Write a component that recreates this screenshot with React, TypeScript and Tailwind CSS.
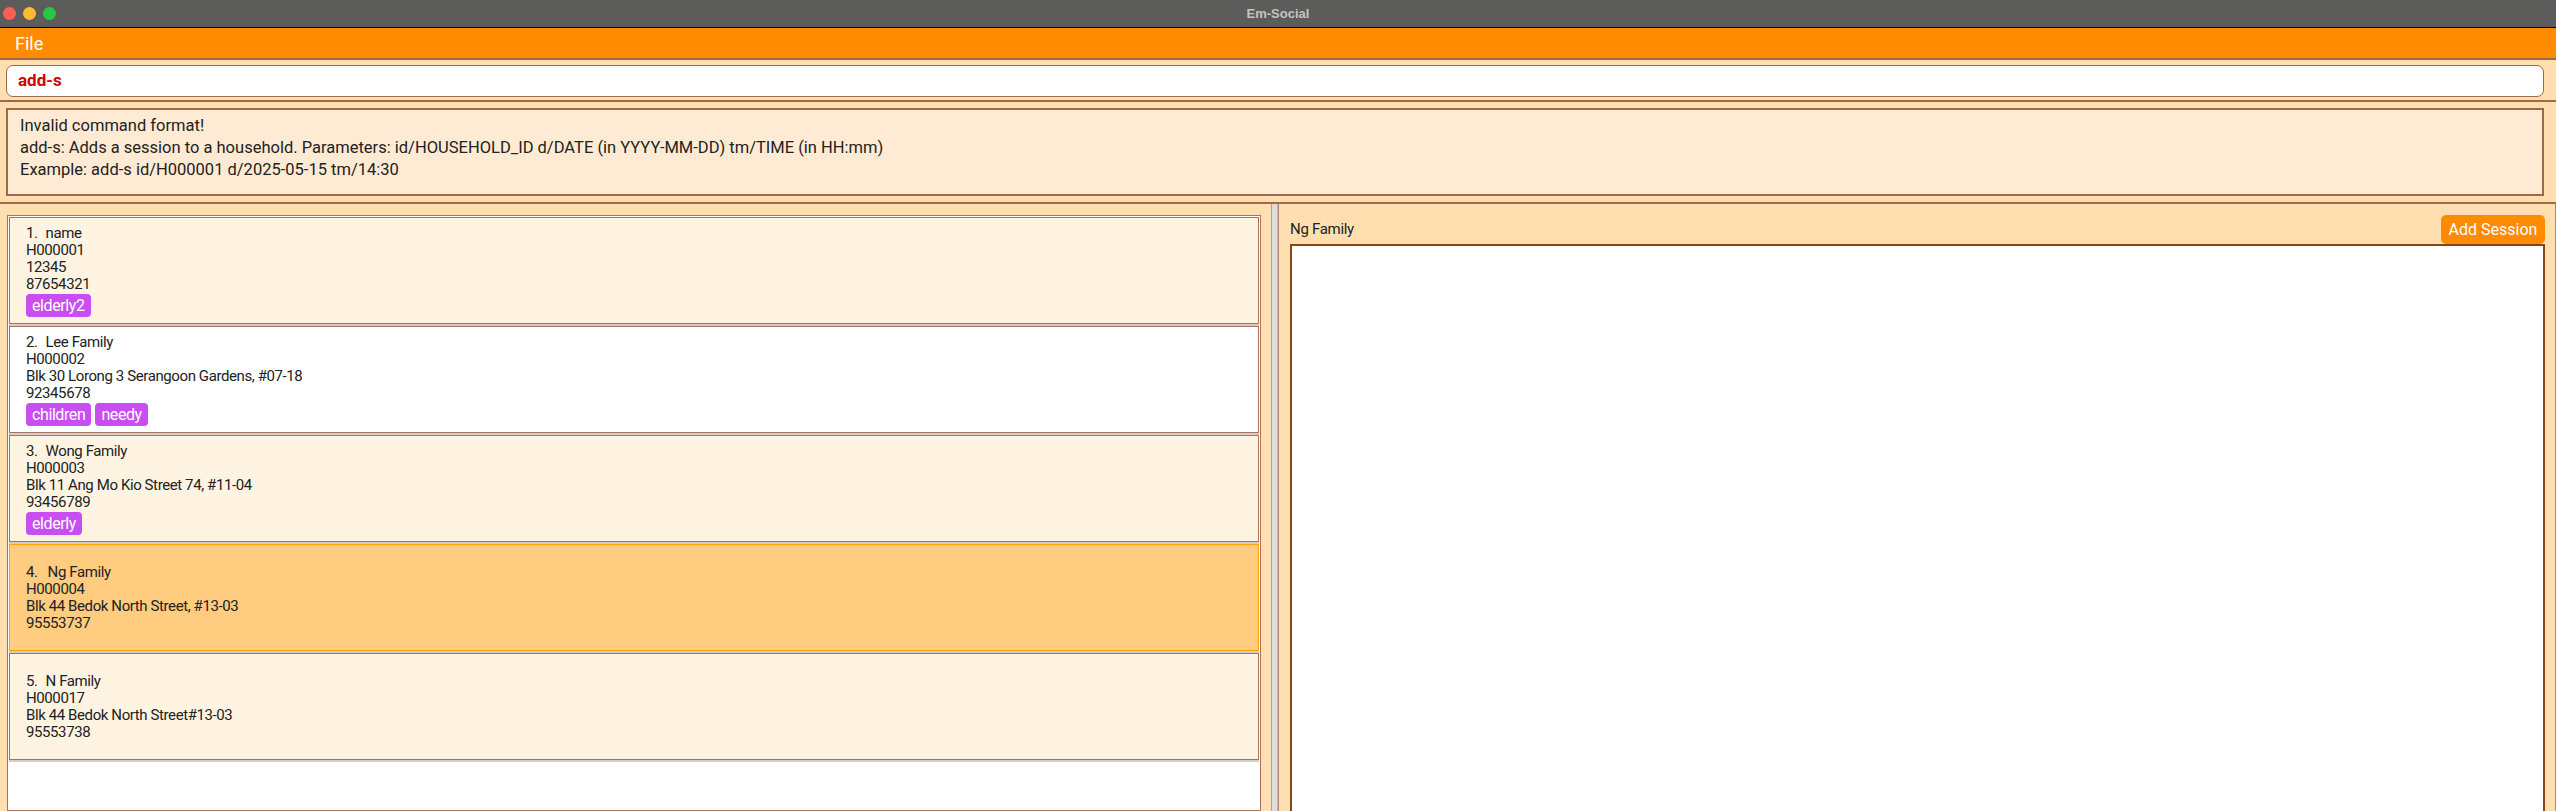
import React from 'react';

type Household = {
  name: string;
  id: string;
  address: string;
  phone: string;
  tags: string[];
};

const households: Household[] = [
  { name: 'name', id: 'H000001', address: '12345', phone: '87654321', tags: ['elderly2'] },
  {
    name: 'Lee Family',
    id: 'H000002',
    address: 'Blk 30 Lorong 3 Serangoon Gardens, #07-18',
    phone: '92345678',
    tags: ['children', 'needy'],
  },
  {
    name: 'Wong Family',
    id: 'H000003',
    address: 'Blk 11 Ang Mo Kio Street 74, #11-04',
    phone: '93456789',
    tags: ['elderly'],
  },
  {
    name: 'Ng Family',
    id: 'H000004',
    address: 'Blk 44 Bedok North Street, #13-03',
    phone: '95553737',
    tags: [],
  },
  {
    name: 'N Family',
    id: 'H000017',
    address: 'Blk 44 Bedok North Street#13-03',
    phone: '95553738',
    tags: [],
  },
];

const SELECTED = 3;

function TitleBar() {
  return (
    <div className="relative h-[28px] shrink-0 bg-[#5c5c5a] border-b border-black flex items-center">
      <div className="flex items-center gap-[7px] pl-[3px]">
        <span className="w-[13px] h-[13px] rounded-full bg-[#ff5f57]" />
        <span className="w-[13px] h-[13px] rounded-full bg-[#febc2e]" />
        <span className="w-[13px] h-[13px] rounded-full bg-[#28c840]" />
      </div>
      <div className="absolute inset-0 flex items-center justify-center text-[13px] font-bold text-[#c4c4c2] font-['Liberation_Sans',sans-serif]">
        Em-Social
      </div>
    </div>
  );
}

function HouseholdCard({ h, index }: { h: Household; index: number }) {
  const selected = index === SELECTED;
  const bg = selected
    ? 'bg-[#ffcc80] border-[#ffa500]'
    : index % 2 === 1
      ? 'bg-white border-[#a87458]'
      : 'bg-[#fff4e1] border-[#a87458]';
  return (
    <div className="border-b-2 border-[#d4ccc8]">
      <div
        className={`h-[107px] border ${bg} flex flex-col justify-center pl-[16px] text-[15px] leading-[17px] tracking-[-0.4px] text-[#222]`}
      >
        <div>
          {index + 1}.<span className={selected ? 'ml-[10px]' : 'ml-[8px]'}>{h.name}</span>
        </div>
        <div>{h.id}</div>
        <div>{h.address}</div>
        <div>{h.phone}</div>
        {h.tags.length > 0 && (
          <div className="flex gap-[4px] mt-[1px]">
            {h.tags.map((t) => (
              <span
                key={t}
                className="h-[23px] px-[6px] rounded-[4px] bg-[#c84ef2] text-white text-[16px] tracking-[-0.4px] flex items-center"
              >
                {t}
              </span>
            ))}
          </div>
        )}
      </div>
    </div>
  );
}

export default function App() {
  return (
    <div className="w-[2556px] h-[811px] overflow-hidden flex flex-col bg-[#ffdfb0] font-['Roboto',sans-serif]">
      <TitleBar />

      {/* menu */}
      <div className="h-[32px] shrink-0 bg-[#ff8c00] border-b-2 border-[#a0694b] flex items-center pl-[15px]">
        <span className="text-white text-[18px]">File</span>
      </div>

      {/* command box */}
      <div className="h-[42px] shrink-0 px-[6px] pt-[5px] border-b-2 border-[#a0694b]">
        <div className="h-[32px] w-[2538px] bg-white border border-[#a0694b] rounded-[7px] flex items-center pl-[11px]">
          <span className="text-[#d40000] font-bold text-[17px]">add-s</span>
        </div>
      </div>

      {/* result box */}
      <div className="h-[102px] shrink-0 px-[6px] pt-[6px] border-b-2 border-[#a0694b]">
        <div className="h-[88px] w-[2538px] bg-[#ffebd3] border-2 border-[#a0694b] px-[12px] pt-[5px] text-[16.5px] leading-[22px] text-[#222]">
          <div>Invalid command format!</div>
          <div>add-s: Adds a session to a household. Parameters: id/HOUSEHOLD_ID d/DATE (in YYYY-MM-DD) tm/TIME (in HH:mm)</div>
          <div>Example: add-s id/H000001 d/2025-05-15 tm/14:30</div>
        </div>
      </div>

      {/* panels */}
      <div className="flex-1 min-h-0 flex">
        <div className="w-[1272px] shrink-0 pl-[7px] pr-[10px] pt-[11px] border-r border-[#b8a090]">
          <div className="h-full bg-white border border-[#a87458] p-[1px]">
            {households.map((h, i) => (
              <HouseholdCard key={h.id} h={h} index={i} />
            ))}
          </div>
        </div>

        <div className="w-[6px] shrink-0 bg-[#dedede] border-r border-[#c0b8b0]" />

        <div className="flex-1 flex flex-col pl-[11px] pr-[10px] pt-[11px] border-l border-r border-[#b88868]">
          <div className="h-[29px] shrink-0 flex items-center justify-between">
            <span className="text-[15px] tracking-[-0.3px] text-[#222]">Ng Family</span>
            <button className="h-[29px] w-[104px] rounded-[5px] bg-[#ff8c00] text-white text-[16px]">
              Add Session
            </button>
          </div>
          <div className="flex-1 bg-white border-2 border-b-0 border-[#8b4513]" />
        </div>
      </div>
    </div>
  );
}
